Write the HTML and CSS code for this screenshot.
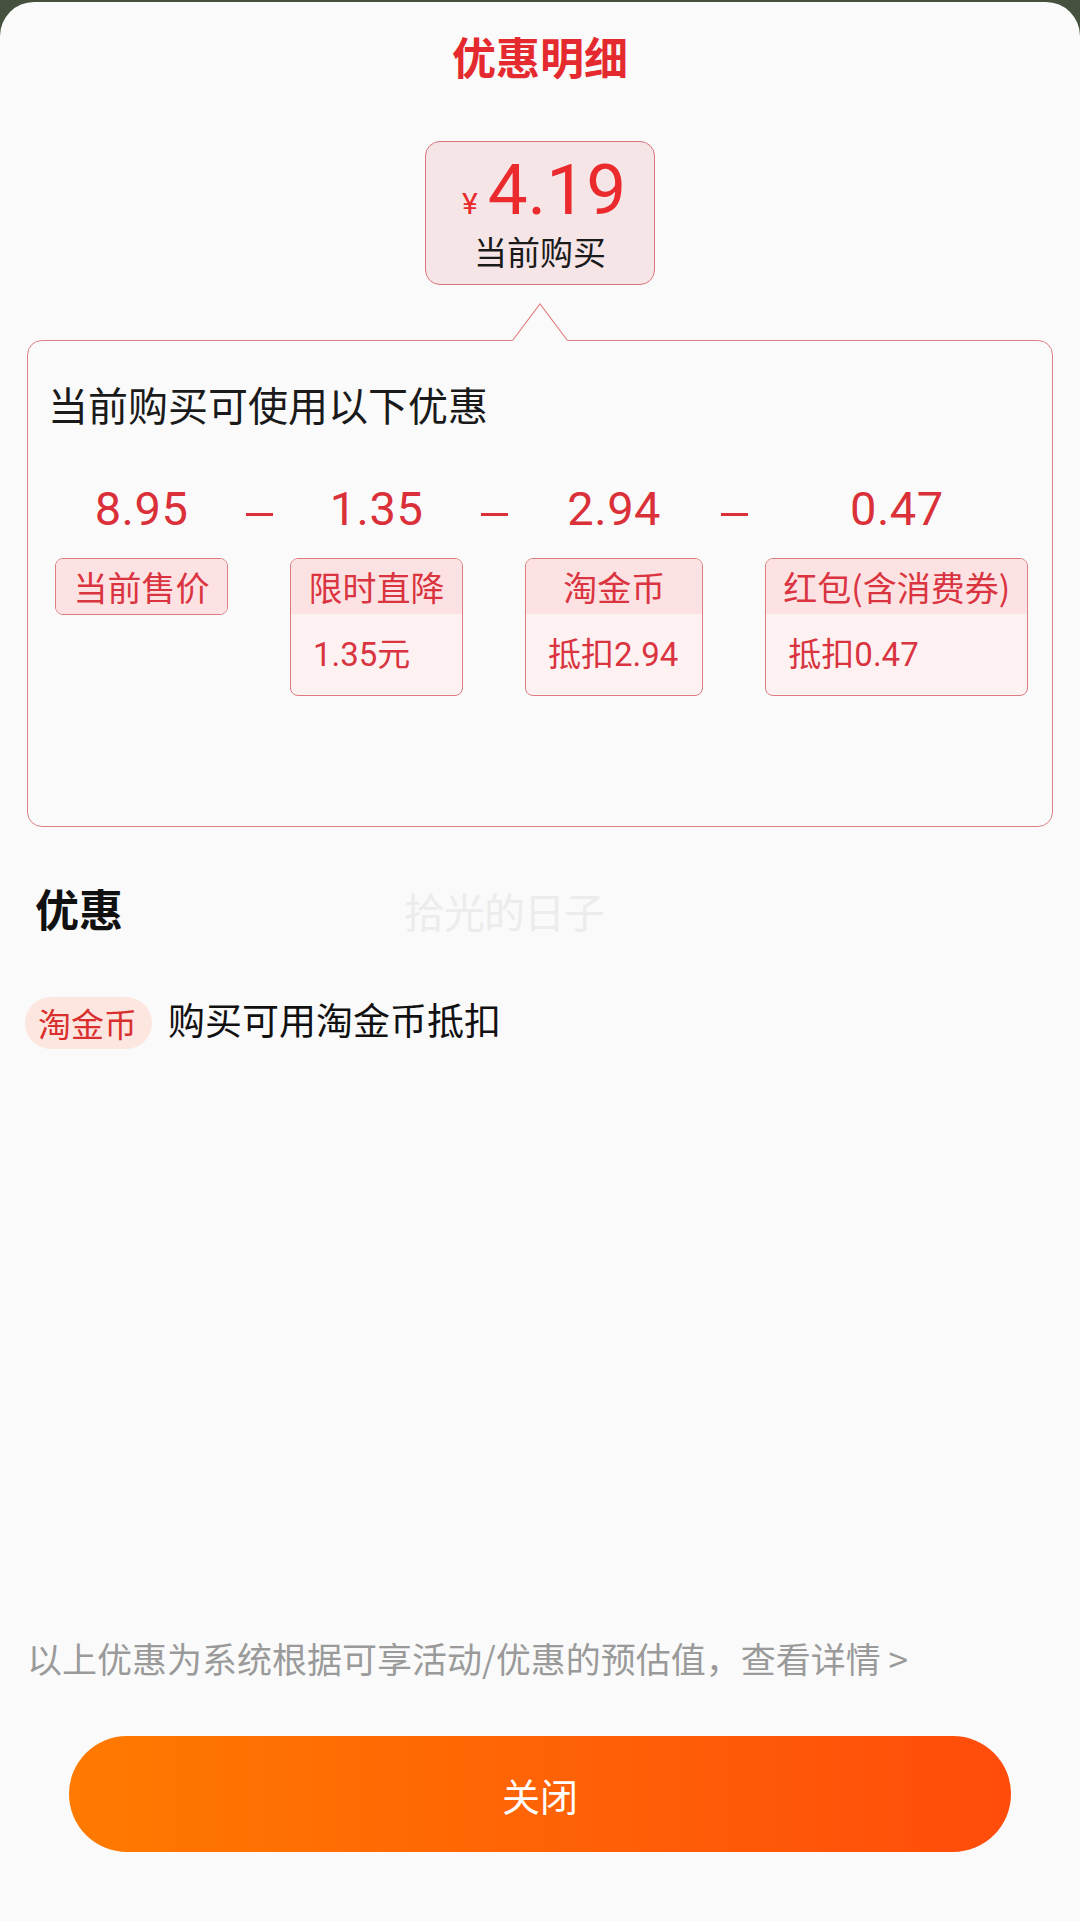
FILE: index.html
```html
<!DOCTYPE html>
<html lang="zh-CN">
<head>
    <meta charset="UTF-8">
    <meta name="viewport" content="width=device-width, initial-scale=1.0">
    <title>优惠明细</title>
    <link rel="stylesheet" href="styles.css">
</head>
<body>
    <div class="sheet">
        <h1 class="title">优惠明细</h1>

        <div class="price-box">
            <div class="price"><span class="yen">¥</span>4.19</div>
            <div class="price-label">当前购买</div>
        </div>

        <div class="detail">
            <svg class="pointer" width="56" height="38" viewBox="0 0 56 38">
                <path d="M0 38 L28 1 L56 38 Z" fill="#fafafa"/>
                <path d="M0.5 37.5 L28 1 L55.5 37.5" fill="none" stroke="#e07f84" stroke-width="1.2"/>
            </svg>
            <h2 class="detail-title">当前购买可使用以下优惠</h2>
            <div class="calc">
                <div class="col">
                    <div class="val">8.95</div>
                    <div class="tag">
                        <div class="tag-head">当前售价</div>
                    </div>
                </div>
                <div class="sep"><span></span></div>
                <div class="col">
                    <div class="val">1.35</div>
                    <div class="tag">
                        <div class="tag-head">限时直降</div>
                        <div class="tag-body">1.35元</div>
                    </div>
                </div>
                <div class="sep"><span></span></div>
                <div class="col">
                    <div class="val">2.94</div>
                    <div class="tag">
                        <div class="tag-head">淘金币</div>
                        <div class="tag-body">抵扣2.94</div>
                    </div>
                </div>
                <div class="sep"><span></span></div>
                <div class="col">
                    <div class="val">0.47</div>
                    <div class="tag wide">
                        <div class="tag-head">红包(含消费券)</div>
                        <div class="tag-body">抵扣0.47</div>
                    </div>
                </div>
            </div>
        </div>

        <h3 class="section-title">优惠</h3>
        <div class="watermark">拾光的日子</div>

        <div class="benefit">
            <span class="pill">淘金币</span>
            <span class="benefit-text">购买可用淘金币抵扣</span>
        </div>

        <p class="note">以上优惠为系统根据可享活动/优惠的预估值，查看详情 &gt;</p>
        <button class="close-btn">关闭</button>
    </div>
</body>
</html>
```

FILE: styles.css
```css
body {
    margin: 0;
    background-color: #46503f;
    font-family: "Noto Sans CJK SC", sans-serif;
    color: #1a1a1a;
}

.sheet {
    position: relative;
    margin: 2px 0 0;
    min-height: 1919px;
    box-sizing: border-box;
    padding: 32px 27px 69px;
    background-color: #fafafa;
    border-radius: 34px 34px 0 0;
    display: flex;
    flex-direction: column;
}

.title {
    margin: 0;
    font-size: 44px;
    line-height: 1;
    font-weight: bold;
    color: #e42a2e;
    text-align: center;
}

.price-box {
    align-self: center;
    width: 230px;
    box-sizing: border-box;
    margin-top: 63px;
    padding: 12px 0 16px;
    background-color: #f6e5e7;
    border: 1px solid #d9747a;
    border-radius: 15px;
    display: flex;
    flex-direction: column;
    align-items: center;
    gap: 10px;
}

.price {
    font-family: Roboto, "Noto Sans CJK SC", sans-serif;
    font-size: 71px;
    line-height: 1;
    color: #ea2a2c;
    padding-left: 8px;
}

.yen {
    font-size: 30px;
    margin-right: 10px;
}

.price-label {
    font-size: 33px;
    line-height: 1;
    color: #1a1a1a;
}

.detail {
    position: relative;
    margin-top: 55px;
    padding: 43px 20px 130px;
    border: 1px solid #e07f84;
    border-radius: 15px;
}

.pointer {
    position: absolute;
    top: -38px;
    left: 50%;
    margin-left: -28px;
}

.detail-title {
    margin: 0;
    font-size: 40px;
    line-height: 1;
    font-weight: normal;
    color: #1a1a1a;
}

.calc {
    display: flex;
    align-items: flex-start;
    margin-top: 61px;
    padding-left: 7px;
}

.col {
    display: flex;
    flex-direction: column;
    align-items: center;
    gap: 26px;
}

.val {
    font-family: Roboto, sans-serif;
    font-size: 47px;
    line-height: 1;
    color: #da3039;
    letter-spacing: 0.5px;
}

.sep {
    width: 62px;
    display: flex;
    justify-content: center;
    padding-top: 28px;
}

.sep span {
    width: 27px;
    height: 3px;
    background-color: #da3039;
}

.tag {
    min-width: 173px;
    box-sizing: border-box;
    border: 1px solid #dc7b80;
    border-radius: 8px;
    overflow: hidden;
    color: #d93440;
    background-color: #fdf1f1;
}

.tag.wide {
    min-width: 262px;
}

.tag-head {
    padding: 0 17px;
    height: 55px;
    line-height: 55px;
    font-size: 34px;
    text-align: center;
    background-color: #fde2e3;
    white-space: nowrap;
}

.tag-body {
    padding: 0 24px 0 22px;
    height: 81px;
    line-height: 81px;
    font-family: Roboto, "Noto Sans CJK SC", sans-serif;
    font-size: 33px;
    white-space: nowrap;
}

.section-title {
    margin: 59px 0 0 8px;
    font-size: 44px;
    line-height: 1;
    font-weight: bold;
    color: #111;
}

.watermark {
    position: absolute;
    left: 404px;
    top: 888px;
    font-size: 41px;
    line-height: 1;
    color: #ececec;
    letter-spacing: -1px;
}

.benefit {
    display: flex;
    align-items: center;
    margin: 66px 0 0 -2px;
}

.pill {
    height: 52px;
    line-height: 52px;
    padding: 0 15px 0 13px;
    border-radius: 26px;
    background-color: #fde6e0;
    color: #d9302f;
    font-size: 33px;
}

.benefit-text {
    margin-left: 16px;
    font-size: 37px;
    color: #111;
    position: relative;
    top: -4px;
}

.note {
    margin: auto 0 0;
    font-size: 35px;
    line-height: 1;
    color: #9a9a9a;
    white-space: nowrap;
}

.close-btn {
    margin: 61px 42px 0 42px;
    height: 116px;
    border: none;
    border-radius: 58px;
    background: linear-gradient(to right, #ff7a00, #ff4c0b);
    color: #fff;
    font-family: "Noto Sans CJK SC", sans-serif;
    font-size: 38px;
    cursor: pointer;
}
```
